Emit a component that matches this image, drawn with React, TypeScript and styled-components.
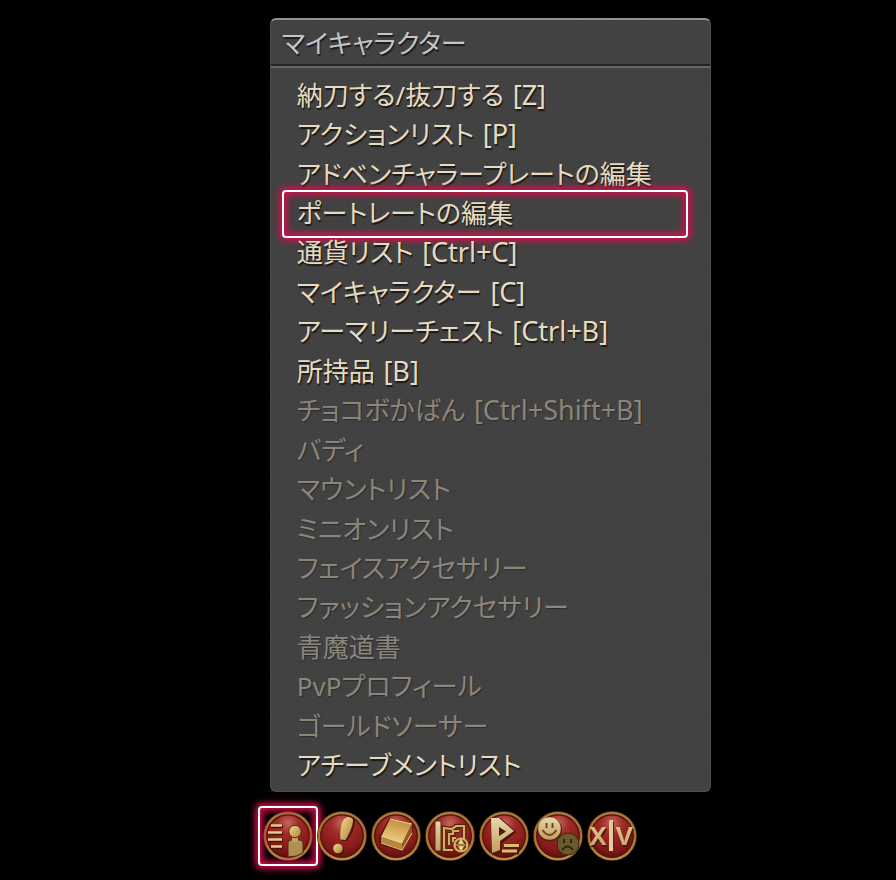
import React from "react";
import styled, { createGlobalStyle, css } from "styled-components";

const GlobalStyle = createGlobalStyle`
  body {
    margin: 0;
    background: #000;
    font-family: "Noto Sans", "Noto Sans CJK JP", sans-serif;
  }
  *, *::before, *::after { box-sizing: border-box; }
`;

const glowRing = css`
  content: "";
  position: absolute;
  border: 2px solid #fff;
  border-radius: 4px;
  box-shadow: 0 0 6px 3px #cf1049, inset 0 0 6px 3px #cf1049;
  pointer-events: none;
`;

const Page = styled.main`
  min-height: 100vh;
  padding: 18px 24px 12px 30.1%;
  display: flex;
  flex-direction: column;
  align-items: flex-start;
  gap: 17px;
`;

const Panel = styled.section`
  width: 100%;
  max-width: 441px;
  border: 1px solid #4c504d;
  border-top: 2px solid #929294;
  border-radius: 6px;
  background:
    repeating-linear-gradient(115deg, transparent 0 12px, rgba(20, 30, 20, 0.02) 13px 15px, transparent 16px 27px),
    repeating-linear-gradient(0deg, transparent 0 8px, rgba(25, 35, 25, 0.04) 9px 10px),
    #434243;
`;

const Title = styled.h1`
  margin: 0;
  height: 46px;
  padding: 0 11px;
  border-bottom: 2px solid #252326;
  color: #c5c4c6;
  font-size: 26px;
  font-weight: 400;
  line-height: 46px;
  font-feature-settings: "palt";
  text-shadow: 1px 2px 1px #1c1b1c;
`;

const MenuList = styled.ul`
  margin: 0;
  padding: 7px 22px 6px 11px;
  border-top: 2px solid #686468;
  list-style: none;
  display: grid;
  grid-auto-rows: 1fr;
  min-height: 725px;
`;

const MenuItem = styled.li`
  display: grid;
`;

const MenuButton = styled.button<{ $marked?: boolean }>`
  position: relative;
  border: 0;
  padding: 0 15px;
  background: none;
  color: #e6dbc0;
  font: inherit;
  font-size: 26px;
  line-height: 36px;
  font-feature-settings: "palt";
  text-align: left;
  white-space: nowrap;
  text-shadow: 1px 2px 1px #1b1a18;
  cursor: pointer;

  &:disabled {
    color: #8b857a;
    text-shadow: 1px 1px 1px #2e2d2c;
    cursor: default;
  }

  ${(p) => p.$marked && css`
    &::after { ${glowRing} inset: -3px 0 -5px; }
  `}
`;

const Shortcut = styled.span`
  margin-left: 2px;
  font-size: 27px;
`;

const IconBar = styled.nav`
  display: flex;
  margin-left: -9px;
`;

const IconButton = styled.button<{ $marked?: boolean }>`
  position: relative;
  width: 54px;
  height: 54px;
  border: 0;
  padding: 0;
  background: none;
  cursor: pointer;

  svg { display: block; width: 54px; height: 54px; }

  ${(p) => p.$marked && css`
    &::after { ${glowRing} inset: -3px; }
  `}
`;

const items: { label: string; keys?: string; disabled?: boolean; marked?: boolean }[] = [
  { label: "納刀する/抜刀する", keys: "[Z]" },
  { label: "アクションリスト", keys: "[P]" },
  { label: "アドベンチャラープレートの編集" },
  { label: "ポートレートの編集", marked: true },
  { label: "通貨リスト", keys: "[Ctrl+C]" },
  { label: "マイキャラクター", keys: "[C]" },
  { label: "アーマリーチェスト", keys: "[Ctrl+B]" },
  { label: "所持品", keys: "[B]" },
  { label: "チョコボかばん", keys: "[Ctrl+Shift+B]", disabled: true },
  { label: "バディ", disabled: true },
  { label: "マウントリスト", disabled: true },
  { label: "ミニオンリスト", disabled: true },
  { label: "フェイスアクセサリー", disabled: true },
  { label: "ファッションアクセサリー", disabled: true },
  { label: "青魔道書", disabled: true },
  { label: "PvPプロフィール", disabled: true },
  { label: "ゴールドソーサー", disabled: true },
  { label: "アチーブメントリスト" },
];

const GradientDefs = () => (
  <defs>
    <radialGradient id="medal" cx="0.5" cy="0.22" r="0.8">
      <stop offset="0" stopColor="#c4685c" />
      <stop offset="0.3" stopColor="#a02a27" />
      <stop offset="0.7" stopColor="#86191a" />
      <stop offset="1" stopColor="#5c0c0c" />
    </radialGradient>
    <linearGradient id="rim" x1="0" y1="0" x2="0" y2="1">
      <stop offset="0" stopColor="#a87a3f" />
      <stop offset="0.5" stopColor="#a8702c" />
      <stop offset="1" stopColor="#b98a48" />
    </linearGradient>
    <linearGradient id="gold" x1="0" y1="0" x2="1" y2="1">
      <stop offset="0" stopColor="#f0dba3" />
      <stop offset="0.5" stopColor="#d3ad62" />
      <stop offset="1" stopColor="#a47d3b" />
    </linearGradient>
    <linearGradient id="cover" x1="0.6" y1="0" x2="0.3" y2="1">
      <stop offset="0" stopColor="#c08a40" />
      <stop offset="0.6" stopColor="#e0b868" />
      <stop offset="1" stopColor="#f3d58e" />
    </linearGradient>
    <linearGradient id="pale" x1="0" y1="0" x2="0" y2="1">
      <stop offset="0" stopColor="#e8d6ab" />
      <stop offset="1" stopColor="#c3a05e" />
    </linearGradient>
  </defs>
);

const Medal = ({ children }: { children: React.ReactNode }) => (
  <svg viewBox="0 0 54 54" aria-hidden="true">
    <circle cx="27" cy="27" r="25" fill="#3a2009" />
    <circle cx="27" cy="27" r="23" fill="url(#medal)" stroke="url(#rim)" strokeWidth="2.6" />
    <circle cx="27" cy="27" r="21.2" fill="none" stroke="#4d150c" strokeWidth="1.2" />
    {children}
  </svg>
);

const CharacterIcon = () => (
  <Medal>
    <path d="M10 17.5h12M8 24.5h14M8 31.5h14M10 38.5h12" stroke="#45150c" strokeWidth="3.5" />
    <path d="M10 16.5h11M7 23.5h14M7 30.5h14M10 37.5h11" stroke="#e5ca8d" strokeWidth="2.6" />
    <path d="M27 48V34q0-3 3-3h9q3 0 3 3v10q-6 4-15 4z" fill="#ad9152" stroke="#52260f" />
    <path d="M31 27h6v6h-6z" fill="#c9a451" />
    <circle cx="34" cy="22.5" r="6.2" fill="url(#gold)" stroke="#52260f" />
  </Medal>
);

const DutyIcon = () => (
  <Medal>
    <path d="M27 32c-1-9 1-19 4-22 3-3 9-1 9 2.5C40 18 36 27 32 32z" fill="#4b160d" />
    <path d="M25.500 30.500c-1-8 1-18 4-21 3-3 8.500-1.500 8.500 2 0 5-4 14-7.500 19.500z" fill="url(#gold)" />
    <circle cx="24" cy="40.5" r="5.2" fill="#4b160d" />
    <circle cx="23" cy="39.5" r="4.8" fill="url(#gold)" />
  </Medal>
);

const BookIcon = () => (
  <Medal>
    <path d="m20 9 25 6-2 11-10 17-23-8v-7z" fill="#541b0b" />
    <path d="m21 10 22 5-10 20-21-7z" fill="url(#cover)" />
    <path d="m12 28 21 7v6l-21-7z" fill="#b9853c" />
    <path d="m33 35 10-20v9L33 41z" fill="#8e5a24" />
    <path d="m12 34 21 7 10-17" fill="none" stroke="#deb066" strokeWidth="1.3" />
    <path d="m21 10 22 5" stroke="#edd39a" strokeWidth="1.2" />
  </Medal>
);

const MapIcon = () => (
  <Medal>
    <path d="M12 12h6v30h-6z" fill="url(#pale)" stroke="#5b270e" />
    <path d="M30 41h-9V19l8 1 4-3h8v13M26 36V25h4v-3h6m-6 11v-4h3" fill="none" stroke="#55210e" strokeWidth="4.5" />
    <path d="M30 41h-9V19l8 1 4-3h8v13M26 36V25h4v-3h6m-6 11v-4h3" fill="none" stroke="#d2ac63" strokeWidth="2.2" />
    <circle cx="38" cy="36" r="6.5" fill="#6b310f" stroke="#d2ac63" strokeWidth="2.2" />
    <path d="m38 30 2.500 4.500h-5zM38 42l2.500-4.500h-5zM31 36h14" fill="#f0d492" stroke="#e2c17a" strokeWidth="1" />
  </Medal>
);

const PartyIcon = () => (
  <Medal>
    <path d="M16 10h7l15 13-14 11v9l-8 2z" fill="#50170d" stroke="#50170d" strokeWidth="2" />
    <path fillRule="evenodd" d="M14 9h8l15 13-14 10v9l-8 3zM22 18v9l7-4.500z" fill="url(#pale)" />
    <path d="M27 37.5h16M26 43h16" stroke="#50170d" strokeWidth="4.5" />
    <path d="M27 36.5h15M25 42h15" stroke="#d8bd70" strokeWidth="2.8" />
  </Medal>
);

const SocialIcon = () => (
  <Medal>
    <circle cx="37" cy="35" r="11" fill="#6b5a2e" stroke="#3d260f" />
    <path d="M33 30v4m7-4v4M31 41q6-7 11 0" fill="none" stroke="#34250f" strokeWidth="2" />
    <circle cx="19" cy="20.5" r="12" fill="#55200d" />
    <circle cx="18.5" cy="19.5" r="11.3" fill="url(#pale)" />
    <path d="M15.5 14v5m6-5v5M11.5 21q7 10 14 0" fill="none" stroke="#6e4521" strokeWidth="2" />
  </Medal>
);

const LogoText = styled.text`
  font-family: "Open Sans", sans-serif;
  font-size: 32px;
  font-weight: 600;
  fill: url(#pale);
  filter: drop-shadow(1px 2px 0 #4d150d);
`;

const SystemIcon = () => (
  <Medal>
    <LogoText x="26" y="36" textAnchor="middle">xlv</LogoText>
    <path d="M26 13v29" stroke="#dfcb9b" strokeWidth="4" />
  </Medal>
);

const HiddenDefs = styled.svg`
  position: absolute;
  width: 0;
  height: 0;
`;

const icons = [
  { label: "マイキャラクター", Icon: CharacterIcon, marked: true },
  { label: "コンテンツ", Icon: DutyIcon },
  { label: "記録", Icon: BookIcon },
  { label: "マップ", Icon: MapIcon },
  { label: "パーティ", Icon: PartyIcon },
  { label: "ソーシャル", Icon: SocialIcon },
  { label: "システム", Icon: SystemIcon },
];

export default function App() {
  return (
    <>
      <GlobalStyle />
      <HiddenDefs aria-hidden="true"><GradientDefs /></HiddenDefs>
      <Page lang="ja">
        <Panel>
          <Title>マイキャラクター</Title>
          <MenuList>
            {items.map(({ label, keys, disabled, marked }) => (
              <MenuItem key={label}>
                <MenuButton type="button" disabled={disabled} $marked={marked}>
                  {label}
                  {keys && <> <Shortcut>{keys}</Shortcut></>}
                </MenuButton>
              </MenuItem>
            ))}
          </MenuList>
        </Panel>
        <IconBar aria-label="メインメニュー">
          {icons.map(({ label, Icon, marked }) => (
            <IconButton key={label} type="button" aria-label={label} $marked={marked}>
              <Icon />
            </IconButton>
          ))}
        </IconBar>
      </Page>
    </>
  );
}
